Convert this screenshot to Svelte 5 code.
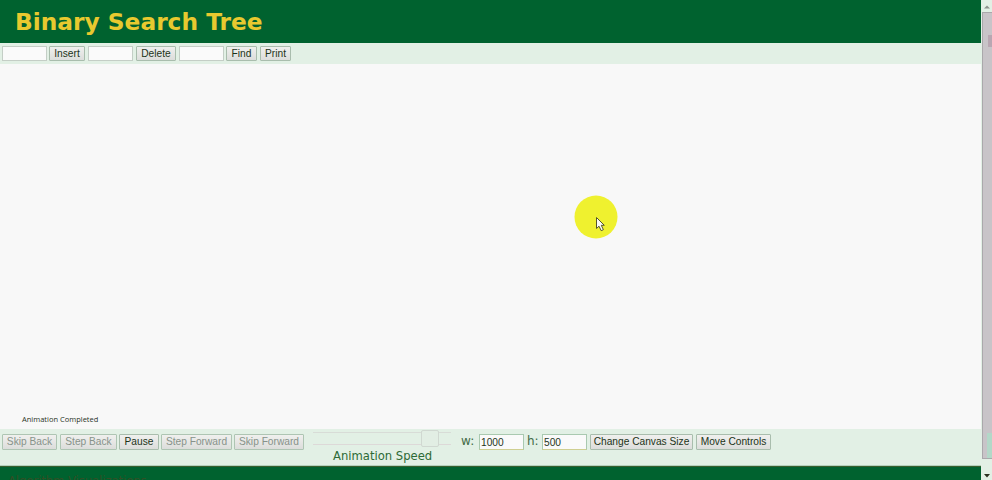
<script>
  const playback = [
    { label: 'Skip Back', width: 55, gap: 3, disabled: true },
    { label: 'Step Back', width: 57, gap: 2, disabled: true },
    { label: 'Pause', width: 40, gap: 2, disabled: false },
    { label: 'Step Forward', width: 71, gap: 2, disabled: true },
    { label: 'Skip Forward', width: 70, gap: 8, disabled: true }
  ];
  let width = $state('1000');
  let height = $state('500');
</script>

<div class="window">
  <main>
    <header><h1>Binary Search Tree</h1></header>
    <div class="toolbar">
      <input aria-label="Insert value" />
      <button class="insert">Insert</button>
      <input aria-label="Delete value" />
      <button class="delete">Delete</button>
      <input aria-label="Find value" />
      <button class="find">Find</button>
      <button class="print">Print</button>
    </div>
    <section class="canvas">
      <span class="status">Animation Completed</span>
      <svg class="pointer" width="48" height="48" viewBox="0 0 48 48">
        <circle cx="24" cy="24" r="21.5" fill="#eff12f" />
        <path d="M24.5 24.5v11l2.5-2.3 2.2 4.5 2.2-1-2.1-4.4h3z" fill="#fbfbf4" stroke="#55562a" />
      </svg>
    </section>
    <div class="controls">
      {#each playback as item}
        <button disabled={item.disabled} style="width:{item.width}px;margin-right:{item.gap}px">{item.label}</button>
      {/each}
      <div class="speed">
        <div class="slider"><i></i></div>
        <span>Animation Speed</span>
      </div>
      <label class="w" for="cw">w:</label>
      <input id="cw" bind:value={width} />
      <label class="h" for="ch">h:</label>
      <input id="ch" bind:value={height} />
      <button class="size">Change Canvas Size</button>
      <button class="move">Move Controls</button>
    </div>
    <footer><span>Algorithm Visualizations</span></footer>
  </main>
  <aside>
    <svg width="11" height="12"><path d="M3 8.5h6l-3-3z" fill="#8a928b" /></svg>
    <div class="thumb"><i></i><b></b></div>
    <svg width="11" height="21"><path d="M3 15h6l-3 3.5z" fill="#29301f" /></svg>
  </aside>
</div>

<style>
  .window { display: flex; width: 992px; height: 480px; overflow: hidden; background: #f8f8f8; font-family: 'DejaVu Sans', Verdana, sans-serif; }
  main { width: 981px; flex: none; display: flex; flex-direction: column; }
  header { height: 43px; background: #00622f; box-sizing: border-box; }
  h1 { margin: 0; padding-left: 15px; font: bold 23.3px/44px 'DejaVu Sans', Verdana, sans-serif; color: #e8c92f; white-space: nowrap; }
  .toolbar { height: 21px; background: #e2f0e5; display: flex; align-items: flex-start; padding: 3px 0 0 2px; box-sizing: border-box; }
  button, input { box-sizing: border-box; height: 16px; flex: none; font: 10.2px/14px 'Liberation Sans', Arial, sans-serif; }
  button { margin: 0; padding: 0; border: 1px solid #a9bdad; border-radius: 1px; background: linear-gradient(#f0f0ee, #dcdddb); color: #1c3318; white-space: nowrap; }
  .toolbar input, .toolbar button { height: 15px; line-height: 13px; }
  .insert { width: 36px; margin: 0 3px 0 2px; }
  .delete { width: 40px; margin: 0 3px; }
  .find { width: 31px; margin: 0 3px 0 2px; }
  .print { width: 31px; }
  button:disabled { color: #87928a; border-color: #aec5b3; }
  input { width: 45px; padding: 0 1px; border: 1px solid #c4cec6; border-radius: 0; background: #fafafa; color: #1f351d; outline: none; }
  .canvas { position: relative; height: 365px; background: #f8f8f8; }
  .status { position: absolute; left: 22px; top: 350px; font: 7.5px/10px 'Open Sans', 'Noto Sans', sans-serif; color: #28331f; white-space: nowrap; }
  .pointer { position: absolute; left: 571.5px; top: 128.5px; }
  .controls { height: 37px; background: #e2f0e5; display: flex; align-items: flex-start; padding: 5px 0 0 2px; box-sizing: border-box; border-bottom: 1px solid #b5d1bd; }
  .controls input { border-color: #a9c9b0; border-bottom-color: #cfcf91; }
  .speed { width: 141px; height: 32px; margin-top: -5px; }
  .slider { position: relative; width: 138px; height: 11px; margin: 3px 0 0 1px; border-top: 1px solid #d8dcd7; border-bottom: 1px solid #ddd9d8; }
  .slider i { position: absolute; left: 108px; top: -3px; width: 16px; height: 15px; border: 1px solid #d0d8d1; border-radius: 2px; background: #e2eee4; }
  .speed span { display: block; padding-left: 21px; font-size: 11.6px; line-height: 14px; margin-top: 4px; color: #2d6a36; white-space: nowrap; }
  label { font-size: 12px; line-height: 14px; color: #416b47; }
  .w { width: 18px; margin-left: 8px; }
  .h { width: 15px; margin-left: 3px; }
  .size { width: 103px; margin-left: 3px; }
  .move { width: 75px; margin-left: 3px; }
  footer { height: 14px; background: #00622f; overflow: hidden; box-sizing: border-box; border-top: 1px solid #365f2e; }
  footer span { display: block; padding: 6px 0 0 8px; font-size: 11.5px; line-height: 16px; color: #314f25; white-space: nowrap; }
  aside { width: 11px; flex: none; background: #e2f0e5; display: flex; flex-direction: column; }
  aside svg { flex: none; display: block; }
  .thumb { position: relative; height: 445px; width: 9px; margin-left: 1px; border: 1px solid #aaa8ab; border-right: 0; background: #c8c4c8; }
  .thumb i { position: absolute; left: 5px; top: 22px; width: 4px; height: 12px; background: #b8a7b2; }
  .thumb b { position: absolute; left: 4px; bottom: 0; width: 5px; height: 25px; background: #b3d8c8; }
</style>
